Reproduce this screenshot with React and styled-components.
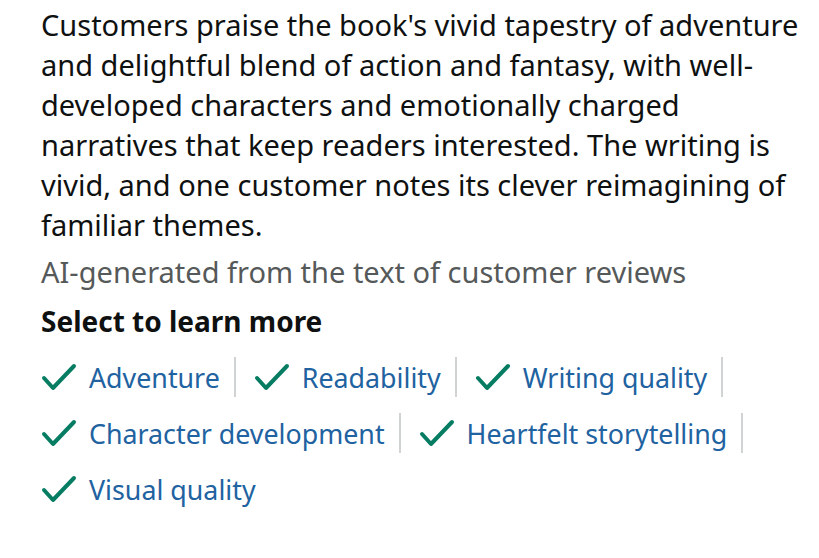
import React from 'react';
import styled, { createGlobalStyle } from 'styled-components';

const GlobalStyle = createGlobalStyle`
  html, body {
    margin: 0;
    padding: 0;
    background: #ffffff;
  }
  body {
    font-family: 'Noto Sans', 'Open Sans', Arial, sans-serif;
  }
`;

const Wrapper = styled.div`
  width: 819px;
  height: 558px;
  box-sizing: border-box;
  padding: 5px 0 0 41px;
  overflow: hidden;
`;

const Summary = styled.p`
  margin: 0;
  font-size: 29px;
  line-height: 40px;
  color: #0f1111;
  white-space: nowrap;
`;

const Note = styled.p`
  margin: 7px 0 0 0;
  font-size: 29px;
  line-height: 40px;
  color: #565959;
`;

const Heading = styled.h4`
  margin: 9px 0 0 0;
  font-size: 28px;
  line-height: 40px;
  font-weight: 700;
  color: #0f1111;
`;

const Chips = styled.div`
  display: flex;
  flex-wrap: wrap;
  margin-top: 16px;
  row-gap: 16px;
  padding-right: 20px;
`;

const Chip = styled.a`
  display: flex;
  align-items: center;
  height: 40px;
  padding-right: 14px;
  margin-right: 18px;
  border-right: ${(p) => (p.$last ? 'none' : '2px solid #d0d3d3')};
  text-decoration: none;
  font-size: 26.8px;
  color: #2162a1;
  cursor: pointer;
`;

const Check = styled.svg`
  width: 36px;
  height: 28px;
  margin-right: 12px;
  flex-shrink: 0;
`;

const lines = [
  "Customers praise the book's vivid tapestry of adventure",
  'and delightful blend of action and fantasy, with well-',
  'developed characters and emotionally charged',
  'narratives that keep readers interested. The writing is',
  'vivid, and one customer notes its clever reimagining of',
  'familiar themes.',
];

const tags = [
  'Adventure',
  'Readability',
  'Writing quality',
  'Character development',
  'Heartfelt storytelling',
  'Visual quality',
];

const App = () => (
  <>
    <GlobalStyle />
    <Wrapper>
      <Summary>
        {lines.map((l, i) => (
          <React.Fragment key={i}>
            {l}
            {i < lines.length - 1 && <br />}
          </React.Fragment>
        ))}
      </Summary>
      <Note>AI-generated from the text of customer reviews</Note>
      <Heading>Select to learn more</Heading>
      <Chips>
        {tags.map((t, i) => (
          <Chip key={t} $last={i === tags.length - 1}>
            <Check viewBox="0 0 36 28">
              <path
                d="M3 15 L12 25 L33 3"
                fill="none"
                stroke="#067d62"
                strokeWidth="4"
                strokeLinecap="round"
                strokeLinejoin="round"
              />
            </Check>
            {t}
          </Chip>
        ))}
      </Chips>
    </Wrapper>
  </>
);

export default App;
